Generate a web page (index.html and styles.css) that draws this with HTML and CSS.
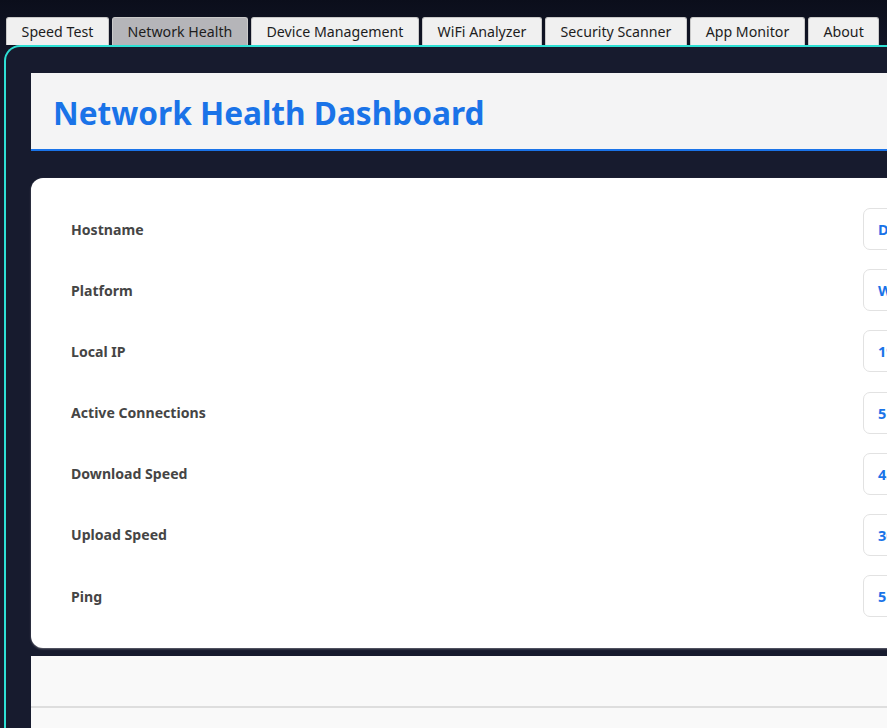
FILE: index.html
```html
<!DOCTYPE html>
<html lang="en">
<head>
<meta charset="utf-8">
<title>Network Health</title>
<link rel="stylesheet" href="styles.css">
</head>
<body>
<nav class="tabs">
  <button class="tab">Speed Test</button>
  <button class="tab active">Network Health</button>
  <button class="tab">Device Management</button>
  <button class="tab">WiFi Analyzer</button>
  <button class="tab">Security Scanner</button>
  <button class="tab">App Monitor</button>
  <button class="tab">About</button>
</nav>
<main class="panel">
  <header class="header">
    <h1 class="title">Network Health Dashboard</h1>
  </header>
  <section class="card">
    <div class="row"><span class="label">Hostname</span><span class="value">DESKTOP-PC</span></div>
    <div class="row"><span class="label">Platform</span><span class="value">Windows</span></div>
    <div class="row"><span class="label">Local IP</span><span class="value">192.168.1.10</span></div>
    <div class="row"><span class="label">Active Connections</span><span class="value">5</span></div>
    <div class="row"><span class="label">Download Speed</span><span class="value">45.2 Mbps</span></div>
    <div class="row"><span class="label">Upload Speed</span><span class="value">30.1 Mbps</span></div>
    <div class="row"><span class="label">Ping</span><span class="value">5 ms</span></div>
  </section>
  <section class="footer">
    <div class="footer-top"></div>
    <div class="footer-bottom"></div>
  </section>
</main>
</body>
</html>
```

FILE: styles.css
```css
html, body {
  margin: 0;
  height: 100%;
  overflow: hidden;
}
body {
  background: linear-gradient(180deg, #0b0e1b 0px, #131729 60px, #171b2e 200px);
  font-family: "Noto Sans", "Open Sans", sans-serif;
  width: 887px;
}
.tabs {
  display: flex;
  gap: 3px;
  padding: 17px 0 0 6px;
  height: 28px;
  box-sizing: content-box;
}
.tab {
  font-family: "Noto Sans", "Open Sans", sans-serif;
  font-size: 14.2px;
  color: #1d1d1d;
  background: #f0f0f0;
  border: 1px solid #c9c9c9;
  border-bottom: none;
  border-radius: 3px 3px 0 0;
  padding: 0 14.6px;
  height: 28px;
  line-height: 26px;
  white-space: nowrap;
  flex: none;
}
.tab.active {
  background: #b5b5b9;
}
.panel {
  margin-left: 4px;
  border-top: 2px solid #2ee0d4;
  border-left: 2px solid #2ee0d4;
  border-top-left-radius: 16px;
  background: #171b2e;
  padding: 26px 0 0 25px;
  height: 700px;
  width: 1200px;
}
.header {
  background: #f4f4f5;
  border-bottom: 2px solid #1a73e8;
  height: 76px;
  padding-left: 22px;
  display: flex;
  align-items: center;
}
.title {
  margin: 0;
  font-size: 31.6px;
  font-weight: 700;
  color: #1a73e8;
  letter-spacing: 0;
  padding-top: 2px;
}
.card {
  margin-top: 27px;
  background: #ffffff;
  border-radius: 12px;
  box-shadow: 0 1px 2px rgba(120, 120, 130, 0.8);
  padding: 30px 0 31px 40px;
  display: flex;
  flex-direction: column;
  gap: 19.2px;
}
.row {
  display: grid;
  grid-template-columns: 792px auto;
  align-items: center;
  height: 42px;
}
.label {
  font-size: 14.1px;
  font-weight: 700;
  color: #454545;
}
.value {
  justify-self: start;
  height: 42px;
  box-sizing: border-box;
  border: 1px solid #e2e2e2;
  border-radius: 7px;
  padding: 0 14px;
  line-height: 40px;
  font-size: 14.5px;
  font-weight: 700;
  color: #1a73e8;
}
.footer {
  margin-top: 8px;
  background: #f9f9f9;
}
.footer-top {
  height: 50px;
  border-bottom: 2px solid #dedede;
}
.footer-bottom {
  height: 60px;
}
```
